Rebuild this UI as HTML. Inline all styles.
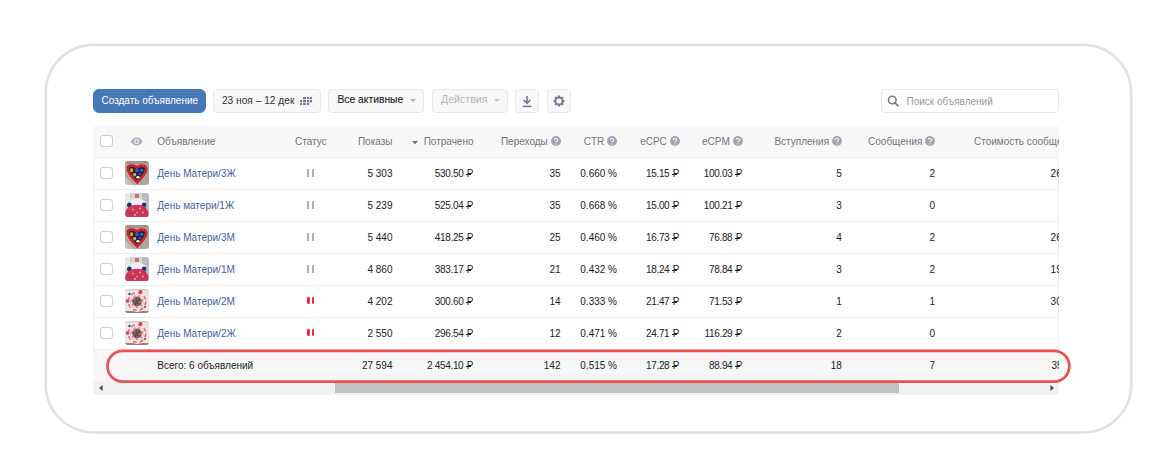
<!DOCTYPE html>
<html><head><meta charset="utf-8"><style>
*{margin:0;padding:0;box-sizing:border-box}
html,body{width:1176px;height:471px;background:#fff;overflow:hidden;position:relative;font-family:"Liberation Sans", sans-serif;font-size:10px}
#root{position:absolute;left:0;top:0;width:1176px;height:471px;}
.rub{position:relative;display:inline-block;margin-left:1px;letter-spacing:0}
.rub:after{content:'';position:absolute;left:-0.9px;width:4.6px;top:16.4px;height:1px;background:currentColor}
.num{letter-spacing:-0.32px}
.t{position:absolute;white-space:nowrap;font-size:10px}
.a{position:absolute;display:block}
.card{position:absolute;left:44.5px;top:43px;width:1089px;height:390.5px;border:3px solid #e6e6e6;border-radius:50px}
.btn{position:absolute;background:#f8f8f9;border:1px solid #e8e9ec;border-radius:4px}
.btn.blue{background:#4877b7;border-color:#4877b7;border-radius:6px}
.search{position:absolute;left:881px;top:89.2px;width:178px;height:23.6px;background:#fff;border:1px solid #e6e8ec;border-radius:4px}
.tbl{position:absolute;left:93.4px;top:125.5px;width:966px;height:269.5px;border:1px solid #eef0f2;border-radius:4px}
.thead{position:absolute;left:93.4px;top:125.5px;width:966px;height:32px;background:#f8f8f8;border-bottom:1px solid #eceef1;border-radius:4px 4px 0 0}
.cb{position:absolute;width:12.8px;height:12.1px;border:1px solid #c9ced6;border-radius:3px;background:#fff}
.rowline{position:absolute;left:93.4px;width:966px;height:1px;background:#eceef1}
.thumb{position:absolute;width:23.5px;height:24px;border-radius:3px;overflow:hidden}
.heart{background:radial-gradient(circle at 45% 45%, #2b3f7a 0 22%, transparent 23%), linear-gradient(135deg, #c9b9a7, #a08c7a);}
.pz{position:absolute;width:2.4px;height:7.6px;border-radius:0.5px}
.total{position:absolute;left:93.4px;width:966px;height:32px;background:#f7f7f8}
.track{position:absolute;left:93.4px;top:381px;width:966px;height:13.7px;background:#f1f1f1;border-radius:0 0 4px 4px}
.thumbbar{position:absolute;left:334.8px;top:383.2px;width:564.7px;height:9.6px;background:#c1c1c1}
.clip{position:absolute;left:93.5px;top:125.5px;width:965.5px;height:256px;overflow:hidden}
.redring{position:absolute;left:106.2px;top:349.4px;width:964.4px;height:33.3px;border:3px solid #e25656;border-radius:17px}
</style></head>
<body><div id="root">
<svg class="a" style="left:0;top:0" width="1176" height="471"><rect x="45.7" y="44.9" width="1085.5" height="387.5" rx="48" ry="48" fill="none" stroke="#e2e2e2" stroke-width="2.6"/></svg>
<div class="btn blue" style="left:93px;top:89px;width:113px;height:23.9px;"></div>
<div class="t" style="left:101.5px;top:89.0px;color:#fff;line-height:24px">Создать объявление</div>
<div class="btn" style="left:213px;top:89px;width:107.5px;height:24px;"></div>
<div class="t" style="left:221.9px;top:89.0px;color:#333;line-height:24px;font-size:10.2px">23 ноя – 12 дек</div>
<svg class="a" style="left:300px;top:96.8px" width="12.2" height="8.6" viewBox="0 0 12.2 8.6"><rect x="3" y="0" width="3" height="2.2" fill="#717c8e"/><rect x="7" y="0" width="2.2" height="2.2" fill="#717c8e"/><rect x="9.9" y="0" width="2.2" height="2.2" fill="#717c8e"/><rect x="0" y="3" width="2" height="2.4" fill="#717c8e"/><rect x="3" y="3" width="3" height="2.4" fill="#717c8e"/><rect x="7" y="3" width="2.2" height="2.4" fill="#717c8e"/><rect x="9.9" y="3" width="2.2" height="2.4" fill="#717c8e"/><rect x="0" y="6.1" width="2" height="2.4" fill="#717c8e"/><rect x="3" y="6.1" width="3" height="2.4" fill="#717c8e"/><rect x="7" y="6.1" width="2.2" height="2.4" fill="#717c8e"/></svg>
<div class="btn" style="left:328.3px;top:89px;width:95.6px;height:24px;"></div>
<div class="t" style="left:337.5px;top:88.3px;color:#222;line-height:24px;font-size:10.3px;-webkit-text-stroke:0.12px #222">Все активные</div>
<svg class="a" style="left:409.8px;top:99.4px" width="6" height="3.4" viewBox="0 0 6 3.4"><path d="M0 0 H6 L3 3Z" fill="#a7b0bd"/></svg>
<div class="btn" style="left:432.2px;top:89px;width:75.6px;height:24px;"></div>
<div class="t" style="left:441.0px;top:87.4px;color:#b3b7be;line-height:24px;font-size:10.6px">Действия</div>
<svg class="a" style="left:493.8px;top:99.4px" width="6" height="3.4" viewBox="0 0 6 3.4"><path d="M0 0 H6 L3 3Z" fill="#c3c8d0"/></svg>
<div class="btn" style="left:515.2px;top:89px;width:23.8px;height:24px;"></div>
<svg class="a" style="left:521px;top:94.5px" width="12" height="13" viewBox="0 0 12 13"><path d="M6 1 V8.2 M2.6 5 L6 8.4 L9.4 5" stroke="#717d90" stroke-width="1.6" fill="none"/><rect x="1.6" y="10.6" width="8.8" height="1.5" fill="#717d90"/></svg>
<div class="btn" style="left:547.2px;top:89px;width:23.4px;height:24px;"></div>
<svg class="a" style="left:552.9px;top:95px" width="12" height="12" viewBox="0 0 12 12"><path d="M9.92 4.80 L11.35 5.25 L11.35 6.75 L9.92 7.20 L9.62 7.92 L10.31 9.25 L9.25 10.31 L7.92 9.62 L7.20 9.92 L6.75 11.35 L5.25 11.35 L4.80 9.92 L4.08 9.62 L2.75 10.31 L1.69 9.25 L2.38 7.92 L2.08 7.20 L0.65 6.75 L0.65 5.25 L2.08 4.80 L2.38 4.08 L1.69 2.75 L2.75 1.69 L4.08 2.38 L4.80 2.08 L5.25 0.65 L6.75 0.65 L7.20 2.08 L7.92 2.38 L9.25 1.69 L10.31 2.75 L9.62 4.08Z" fill="#6f7888" stroke="#6f7888" stroke-width="0.4" stroke-linejoin="round"/><circle cx="6" cy="6" r="2.6" fill="#f8f8f9"/></svg>
<div class="search"></div>
<svg class="a" style="left:886.5px;top:95.3px" width="12" height="12" viewBox="0 0 12 12"><circle cx="5.3" cy="5" r="3.8" stroke="#747d8e" stroke-width="1.6" fill="none"/><path d="M8 7.8 L10.9 10.7" stroke="#747d8e" stroke-width="1.8" stroke-linecap="round"/></svg>
<div class="t" style="left:906.5px;top:89.6px;color:#939aa4;line-height:23px;font-size:10px">Поиск объявлений</div>
<div class="tbl"></div>
<div class="thead"></div>
<div class="cb" style="left:100.3px;top:135.3px"></div>
<svg class="a" style="left:129.8px;top:137px" width="13.4" height="9" viewBox="0 0 13 9"><path d="M0.6 4.5 C2.2 1.5 4.2 0.6 6.5 0.6 C8.8 0.6 10.8 1.5 12.4 4.5 C10.8 7.5 8.8 8.4 6.5 8.4 C4.2 8.4 2.2 7.5 0.6 4.5Z" fill="#aeb4be"/><circle cx="6.5" cy="4.5" r="2.5" fill="#f8f8f8"/><circle cx="6.5" cy="4.5" r="1.5" fill="#aeb4be"/></svg>
<div class="t" style="left:157.3px;top:126.1px;color:#6f7680;line-height:32px">Объявление</div>
<div class="t" style="left:295.0px;top:126.1px;color:#6f7680;line-height:32px">Статус</div>
<div class="t r" style="right:783.5px;top:126.1px;color:#6f7680;line-height:32px">Показы</div>
<div class="t r" style="right:702.5px;top:126.1px;color:#6f7680;line-height:32px">Потрачено</div>
<svg class="a" style="left:411.9px;top:140.6px" width="6" height="4" viewBox="0 0 6 4"><path d="M0 0 H6 L3 3.2Z" fill="#656d7a"/></svg>
<div class="t r" style="right:628.2px;top:126.1px;color:#6f7680;line-height:32px">Переходы</div>
<svg class="a" style="left:550.5px;top:135.6px" width="10" height="10" viewBox="0 0 10 10"><circle cx="5" cy="5" r="5" fill="#a1a7b1"/><path d="M3.3 3.9 C3.3 2.8 4.1 2.2 5 2.2 C5.9 2.2 6.7 2.8 6.7 3.7 C6.7 4.6 5.9 4.8 5.4 5.2 C5.1 5.4 5 5.7 5 6.2" stroke="#eceef1" stroke-width="1.15" fill="none"/><circle cx="5" cy="7.9" r="0.7" fill="#eceef1"/></svg>
<div class="t r" style="right:571.7px;top:126.1px;color:#6f7680;line-height:32px">CTR</div>
<svg class="a" style="left:607.0px;top:135.6px" width="10" height="10" viewBox="0 0 10 10"><circle cx="5" cy="5" r="5" fill="#a1a7b1"/><path d="M3.3 3.9 C3.3 2.8 4.1 2.2 5 2.2 C5.9 2.2 6.7 2.8 6.7 3.7 C6.7 4.6 5.9 4.8 5.4 5.2 C5.1 5.4 5 5.7 5 6.2" stroke="#eceef1" stroke-width="1.15" fill="none"/><circle cx="5" cy="7.9" r="0.7" fill="#eceef1"/></svg>
<div class="t r" style="right:509.2px;top:126.1px;color:#6f7680;line-height:32px">eCPC</div>
<svg class="a" style="left:669.5px;top:135.6px" width="10" height="10" viewBox="0 0 10 10"><circle cx="5" cy="5" r="5" fill="#a1a7b1"/><path d="M3.3 3.9 C3.3 2.8 4.1 2.2 5 2.2 C5.9 2.2 6.7 2.8 6.7 3.7 C6.7 4.6 5.9 4.8 5.4 5.2 C5.1 5.4 5 5.7 5 6.2" stroke="#eceef1" stroke-width="1.15" fill="none"/><circle cx="5" cy="7.9" r="0.7" fill="#eceef1"/></svg>
<div class="t r" style="right:446.2px;top:126.1px;color:#6f7680;line-height:32px">eCPM</div>
<svg class="a" style="left:732.5px;top:135.6px" width="10" height="10" viewBox="0 0 10 10"><circle cx="5" cy="5" r="5" fill="#a1a7b1"/><path d="M3.3 3.9 C3.3 2.8 4.1 2.2 5 2.2 C5.9 2.2 6.7 2.8 6.7 3.7 C6.7 4.6 5.9 4.8 5.4 5.2 C5.1 5.4 5 5.7 5 6.2" stroke="#eceef1" stroke-width="1.15" fill="none"/><circle cx="5" cy="7.9" r="0.7" fill="#eceef1"/></svg>
<div class="t r" style="right:346.9px;top:126.1px;color:#6f7680;line-height:32px">Вступления</div>
<svg class="a" style="left:831.8px;top:135.6px" width="10" height="10" viewBox="0 0 10 10"><circle cx="5" cy="5" r="5" fill="#a1a7b1"/><path d="M3.3 3.9 C3.3 2.8 4.1 2.2 5 2.2 C5.9 2.2 6.7 2.8 6.7 3.7 C6.7 4.6 5.9 4.8 5.4 5.2 C5.1 5.4 5 5.7 5 6.2" stroke="#eceef1" stroke-width="1.15" fill="none"/><circle cx="5" cy="7.9" r="0.7" fill="#eceef1"/></svg>
<div class="t r" style="right:253.7px;top:126.1px;color:#6f7680;line-height:32px">Сообщения</div>
<svg class="a" style="left:925.0px;top:135.6px" width="10" height="10" viewBox="0 0 10 10"><circle cx="5" cy="5" r="5" fill="#a1a7b1"/><path d="M3.3 3.9 C3.3 2.8 4.1 2.2 5 2.2 C5.9 2.2 6.7 2.8 6.7 3.7 C6.7 4.6 5.9 4.8 5.4 5.2 C5.1 5.4 5 5.7 5 6.2" stroke="#eceef1" stroke-width="1.15" fill="none"/><circle cx="5" cy="7.9" r="0.7" fill="#eceef1"/></svg>
<div class="rowline" style="top:188.5px"></div>
<div class="cb" style="left:100.3px;top:167.4px"></div>
<div class="thumb" style="left:125px;top:161.3px"><svg width="23.5" height="24" viewBox="0 0 23.5 24"><defs><filter id="bh0" x="-10%" y="-10%" width="120%" height="120%"><feGaussianBlur stdDeviation="0.6"/></filter></defs>
<g filter="url(#bh0)"><rect x="-2" y="-2" width="28" height="28" fill="#b3a79c"/>
<rect x="-2" y="-2" width="28" height="5" fill="#a39488"/>
<path d="M-2 13 L11 26 L-2 26Z" fill="#c9c0b8"/>
<path d="M12 6.6 C10 4.2 4.8 3.6 3.1 6 C1.7 8.3 3.4 12.8 12.2 21.4 C20 13.6 22.3 9.3 20.9 6.3 C19.6 3.9 14.2 4 12 6.6Z" fill="#1c2446" stroke="#d62a30" stroke-width="2.7"/>
<path d="M12 6.6 C10 4.2 4.8 3.6 3.1 6 C1.7 8.3 3.4 12.8 12.2 21.4 C20 13.6 22.3 9.3 20.9 6.3 C19.6 3.9 14.2 4 12 6.6Z" fill="none" stroke="#7a1a22" stroke-width="1" stroke-dasharray="1 2.2"/>
<ellipse cx="6.6" cy="9.3" rx="1.6" ry="2" fill="#dca23c"/>
<ellipse cx="9.6" cy="13.6" rx="1.6" ry="1.8" fill="#dea646"/>
<ellipse cx="13" cy="16.3" rx="1.7" ry="1.3" fill="#e8ecf2"/>
<circle cx="11.8" cy="9.6" r="1.8" fill="#3460ac"/>
<circle cx="16.6" cy="9.3" r="1.8" fill="#3a62b0"/>
<circle cx="14.8" cy="12.8" r="1.5" fill="#2a4c98"/>
</g></svg></div>
<div class="t" style="left:157.3px;top:157.5px;color:#3f6499;line-height:32px">День Матери/3Ж</div>
<div class="pz" style="left:307px;top:169.0px;background:#a8b0bc"></div><div class="pz" style="left:312px;top:169.0px;background:#a8b0bc"></div>
<div class="t r" style="right:783.5px;top:157.5px;color:#222;line-height:32px">5 303</div>
<div class="t r" style="right:702.5px;top:157.5px;color:#222;line-height:32px"><span class="num">530.50 <span class="rub">Р</span></span></div>
<div class="t r" style="right:615.5px;top:157.5px;color:#222;line-height:32px">35</div>
<div class="t r" style="right:559.0px;top:157.5px;color:#222;line-height:32px">0.660 %</div>
<div class="t r" style="right:496.5px;top:157.5px;color:#222;line-height:32px"><span class="num">15.15 <span class="rub">Р</span></span></div>
<div class="t r" style="right:433.5px;top:157.5px;color:#222;line-height:32px"><span class="num">100.03 <span class="rub">Р</span></span></div>
<div class="t r" style="right:334.2px;top:157.5px;color:#222;line-height:32px">5</div>
<div class="t r" style="right:241.0px;top:157.5px;color:#222;line-height:32px">2</div>
<div class="rowline" style="top:220.5px"></div>
<div class="cb" style="left:100.3px;top:199.4px"></div>
<div class="thumb" style="left:125px;top:193.3px"><svg width="23.5" height="24" viewBox="0 0 23.5 24"><defs><filter id="bb1" x="-10%" y="-10%" width="120%" height="120%"><feGaussianBlur stdDeviation="0.7"/></filter></defs>
<g filter="url(#bb1)"><rect x="-2" y="-2" width="28" height="28" fill="#d4d5d9"/>
<rect x="-2" y="-2" width="7" height="14" fill="#e8e8ea"/>
<rect x="17" y="-2" width="9" height="28" fill="#bcbdc2"/>
<rect x="10" y="1" width="4" height="4" fill="#c87478"/>
<ellipse cx="12" cy="9.5" rx="8.5" ry="4" fill="#eef0f4"/>
<ellipse cx="4.4" cy="12" rx="2.3" ry="2.6" fill="#22367a"/>
<ellipse cx="19" cy="12" rx="2.3" ry="2.6" fill="#22367a"/>
<path d="M0 24 C0 15 4 11.8 12 11.8 C20 11.8 23.5 15 23.5 24Z" fill="#cc3458"/>
<circle cx="8" cy="16.5" r="0.9" fill="#ee8ca0"/><circle cx="15" cy="15.5" r="1" fill="#f4b0bc"/><circle cx="12" cy="19.5" r="0.9" fill="#ee8ca0"/><circle cx="18" cy="19.5" r="0.9" fill="#f0a0b0"/><circle cx="5" cy="20.5" r="0.9" fill="#a82444"/><circle cx="10" cy="22" r="0.9" fill="#f2a8b8"/><circle cx="4" cy="16" r="1" fill="#e03c4a"/>
</g></svg></div>
<div class="t" style="left:157.3px;top:189.5px;color:#3f6499;line-height:32px">День матери/1Ж</div>
<div class="pz" style="left:307px;top:201.0px;background:#a8b0bc"></div><div class="pz" style="left:312px;top:201.0px;background:#a8b0bc"></div>
<div class="t r" style="right:783.5px;top:189.5px;color:#222;line-height:32px">5 239</div>
<div class="t r" style="right:702.5px;top:189.5px;color:#222;line-height:32px"><span class="num">525.04 <span class="rub">Р</span></span></div>
<div class="t r" style="right:615.5px;top:189.5px;color:#222;line-height:32px">35</div>
<div class="t r" style="right:559.0px;top:189.5px;color:#222;line-height:32px">0.668 %</div>
<div class="t r" style="right:496.5px;top:189.5px;color:#222;line-height:32px"><span class="num">15.00 <span class="rub">Р</span></span></div>
<div class="t r" style="right:433.5px;top:189.5px;color:#222;line-height:32px"><span class="num">100.21 <span class="rub">Р</span></span></div>
<div class="t r" style="right:334.2px;top:189.5px;color:#222;line-height:32px">3</div>
<div class="t r" style="right:241.0px;top:189.5px;color:#222;line-height:32px">0</div>
<div class="rowline" style="top:252.5px"></div>
<div class="cb" style="left:100.3px;top:231.4px"></div>
<div class="thumb" style="left:125px;top:225.3px"><svg width="23.5" height="24" viewBox="0 0 23.5 24"><defs><filter id="bh2" x="-10%" y="-10%" width="120%" height="120%"><feGaussianBlur stdDeviation="0.6"/></filter></defs>
<g filter="url(#bh2)"><rect x="-2" y="-2" width="28" height="28" fill="#b3a79c"/>
<rect x="-2" y="-2" width="28" height="5" fill="#a39488"/>
<path d="M-2 13 L11 26 L-2 26Z" fill="#c9c0b8"/>
<path d="M12 6.6 C10 4.2 4.8 3.6 3.1 6 C1.7 8.3 3.4 12.8 12.2 21.4 C20 13.6 22.3 9.3 20.9 6.3 C19.6 3.9 14.2 4 12 6.6Z" fill="#1c2446" stroke="#d62a30" stroke-width="2.7"/>
<path d="M12 6.6 C10 4.2 4.8 3.6 3.1 6 C1.7 8.3 3.4 12.8 12.2 21.4 C20 13.6 22.3 9.3 20.9 6.3 C19.6 3.9 14.2 4 12 6.6Z" fill="none" stroke="#7a1a22" stroke-width="1" stroke-dasharray="1 2.2"/>
<ellipse cx="6.6" cy="9.3" rx="1.6" ry="2" fill="#dca23c"/>
<ellipse cx="9.6" cy="13.6" rx="1.6" ry="1.8" fill="#dea646"/>
<ellipse cx="13" cy="16.3" rx="1.7" ry="1.3" fill="#e8ecf2"/>
<circle cx="11.8" cy="9.6" r="1.8" fill="#3460ac"/>
<circle cx="16.6" cy="9.3" r="1.8" fill="#3a62b0"/>
<circle cx="14.8" cy="12.8" r="1.5" fill="#2a4c98"/>
</g></svg></div>
<div class="t" style="left:157.3px;top:221.5px;color:#3f6499;line-height:32px">День Матери/3М</div>
<div class="pz" style="left:307px;top:233.0px;background:#a8b0bc"></div><div class="pz" style="left:312px;top:233.0px;background:#a8b0bc"></div>
<div class="t r" style="right:783.5px;top:221.5px;color:#222;line-height:32px">5 440</div>
<div class="t r" style="right:702.5px;top:221.5px;color:#222;line-height:32px"><span class="num">418.25 <span class="rub">Р</span></span></div>
<div class="t r" style="right:615.5px;top:221.5px;color:#222;line-height:32px">25</div>
<div class="t r" style="right:559.0px;top:221.5px;color:#222;line-height:32px">0.460 %</div>
<div class="t r" style="right:496.5px;top:221.5px;color:#222;line-height:32px"><span class="num">16.73 <span class="rub">Р</span></span></div>
<div class="t r" style="right:433.5px;top:221.5px;color:#222;line-height:32px"><span class="num">76.88 <span class="rub">Р</span></span></div>
<div class="t r" style="right:334.2px;top:221.5px;color:#222;line-height:32px">4</div>
<div class="t r" style="right:241.0px;top:221.5px;color:#222;line-height:32px">2</div>
<div class="rowline" style="top:284.5px"></div>
<div class="cb" style="left:100.3px;top:263.4px"></div>
<div class="thumb" style="left:125px;top:257.3px"><svg width="23.5" height="24" viewBox="0 0 23.5 24"><defs><filter id="bb3" x="-10%" y="-10%" width="120%" height="120%"><feGaussianBlur stdDeviation="0.7"/></filter></defs>
<g filter="url(#bb3)"><rect x="-2" y="-2" width="28" height="28" fill="#d4d5d9"/>
<rect x="-2" y="-2" width="7" height="14" fill="#e8e8ea"/>
<rect x="17" y="-2" width="9" height="28" fill="#bcbdc2"/>
<rect x="10" y="1" width="4" height="4" fill="#c87478"/>
<ellipse cx="12" cy="9.5" rx="8.5" ry="4" fill="#eef0f4"/>
<ellipse cx="4.4" cy="12" rx="2.3" ry="2.6" fill="#22367a"/>
<ellipse cx="19" cy="12" rx="2.3" ry="2.6" fill="#22367a"/>
<path d="M0 24 C0 15 4 11.8 12 11.8 C20 11.8 23.5 15 23.5 24Z" fill="#cc3458"/>
<circle cx="8" cy="16.5" r="0.9" fill="#ee8ca0"/><circle cx="15" cy="15.5" r="1" fill="#f4b0bc"/><circle cx="12" cy="19.5" r="0.9" fill="#ee8ca0"/><circle cx="18" cy="19.5" r="0.9" fill="#f0a0b0"/><circle cx="5" cy="20.5" r="0.9" fill="#a82444"/><circle cx="10" cy="22" r="0.9" fill="#f2a8b8"/><circle cx="4" cy="16" r="1" fill="#e03c4a"/>
</g></svg></div>
<div class="t" style="left:157.3px;top:253.5px;color:#3f6499;line-height:32px">День Матери/1М</div>
<div class="pz" style="left:307px;top:265.0px;background:#a8b0bc"></div><div class="pz" style="left:312px;top:265.0px;background:#a8b0bc"></div>
<div class="t r" style="right:783.5px;top:253.5px;color:#222;line-height:32px">4 860</div>
<div class="t r" style="right:702.5px;top:253.5px;color:#222;line-height:32px"><span class="num">383.17 <span class="rub">Р</span></span></div>
<div class="t r" style="right:615.5px;top:253.5px;color:#222;line-height:32px">21</div>
<div class="t r" style="right:559.0px;top:253.5px;color:#222;line-height:32px">0.432 %</div>
<div class="t r" style="right:496.5px;top:253.5px;color:#222;line-height:32px"><span class="num">18.24 <span class="rub">Р</span></span></div>
<div class="t r" style="right:433.5px;top:253.5px;color:#222;line-height:32px"><span class="num">78.84 <span class="rub">Р</span></span></div>
<div class="t r" style="right:334.2px;top:253.5px;color:#222;line-height:32px">3</div>
<div class="t r" style="right:241.0px;top:253.5px;color:#222;line-height:32px">2</div>
<div class="rowline" style="top:316.5px"></div>
<div class="cb" style="left:100.3px;top:295.4px"></div>
<div class="thumb" style="left:125px;top:289.3px"><svg width="23.5" height="24" viewBox="0 0 23.5 24"><defs><filter id="br4" x="-10%" y="-10%" width="120%" height="120%"><feGaussianBlur stdDeviation="0.7"/></filter></defs>
<g filter="url(#br4)"><rect x="-2" y="-2" width="28" height="28" fill="#e9e6e8"/>
<rect x="-2" y="-2" width="28" height="3.5" fill="#d8ccc0"/>
<rect x="-2" y="22" width="28" height="4" fill="#9a8270"/>
<circle cx="12" cy="12.5" r="10.5" fill="#f4e8ea"/>
<circle cx="12" cy="12.5" r="8.8" fill="none" stroke="#e66a80" stroke-width="1.6" stroke-dasharray="4 3"/>
<circle cx="12" cy="12.5" r="6.8" fill="#c89098"/>
<circle cx="12" cy="12.5" r="5.8" fill="none" stroke="#f6e4e6" stroke-width="1.3" stroke-dasharray="3 2"/>
<circle cx="12" cy="12.5" r="4.4" fill="#6a5040"/>
<circle cx="12" cy="12.5" r="3" fill="none" stroke="#e07a88" stroke-width="1.1" stroke-dasharray="2 1.5"/>
<circle cx="10.5" cy="15" r="1.4" fill="#3a5236"/>
<circle cx="14" cy="10" r="1.1" fill="#44583c"/>
<circle cx="2.6" cy="12" r="1.9" fill="#ea4458"/>
<circle cx="15.5" cy="3" r="2" fill="#e63c50"/>
<circle cx="4.5" cy="5" r="1.2" fill="#404660"/>
<circle cx="20" cy="18" r="1.2" fill="#dc4a60"/>
</g></svg></div>
<div class="t" style="left:157.3px;top:285.5px;color:#3f6499;line-height:32px">День Матери/2М</div>
<div class="pz" style="left:306.9px;top:296.8px;width:2.8px;border-radius:1.2px;background:#e3343f"></div><div class="pz" style="left:311.7px;top:296.8px;width:2.8px;border-radius:1.2px;background:#e3343f"></div>
<div class="t r" style="right:783.5px;top:285.5px;color:#222;line-height:32px">4 202</div>
<div class="t r" style="right:702.5px;top:285.5px;color:#222;line-height:32px"><span class="num">300.60 <span class="rub">Р</span></span></div>
<div class="t r" style="right:615.5px;top:285.5px;color:#222;line-height:32px">14</div>
<div class="t r" style="right:559.0px;top:285.5px;color:#222;line-height:32px">0.333 %</div>
<div class="t r" style="right:496.5px;top:285.5px;color:#222;line-height:32px"><span class="num">21.47 <span class="rub">Р</span></span></div>
<div class="t r" style="right:433.5px;top:285.5px;color:#222;line-height:32px"><span class="num">71.53 <span class="rub">Р</span></span></div>
<div class="t r" style="right:334.2px;top:285.5px;color:#222;line-height:32px">1</div>
<div class="t r" style="right:241.0px;top:285.5px;color:#222;line-height:32px">1</div>
<div class="rowline" style="top:348.5px"></div>
<div class="cb" style="left:100.3px;top:327.4px"></div>
<div class="thumb" style="left:125px;top:321.3px"><svg width="23.5" height="24" viewBox="0 0 23.5 24"><defs><filter id="br5" x="-10%" y="-10%" width="120%" height="120%"><feGaussianBlur stdDeviation="0.7"/></filter></defs>
<g filter="url(#br5)"><rect x="-2" y="-2" width="28" height="28" fill="#e9e6e8"/>
<rect x="-2" y="-2" width="28" height="3.5" fill="#d8ccc0"/>
<rect x="-2" y="22" width="28" height="4" fill="#9a8270"/>
<circle cx="12" cy="12.5" r="10.5" fill="#f4e8ea"/>
<circle cx="12" cy="12.5" r="8.8" fill="none" stroke="#e66a80" stroke-width="1.6" stroke-dasharray="4 3"/>
<circle cx="12" cy="12.5" r="6.8" fill="#c89098"/>
<circle cx="12" cy="12.5" r="5.8" fill="none" stroke="#f6e4e6" stroke-width="1.3" stroke-dasharray="3 2"/>
<circle cx="12" cy="12.5" r="4.4" fill="#6a5040"/>
<circle cx="12" cy="12.5" r="3" fill="none" stroke="#e07a88" stroke-width="1.1" stroke-dasharray="2 1.5"/>
<circle cx="10.5" cy="15" r="1.4" fill="#3a5236"/>
<circle cx="14" cy="10" r="1.1" fill="#44583c"/>
<circle cx="2.6" cy="12" r="1.9" fill="#ea4458"/>
<circle cx="15.5" cy="3" r="2" fill="#e63c50"/>
<circle cx="4.5" cy="5" r="1.2" fill="#404660"/>
<circle cx="20" cy="18" r="1.2" fill="#dc4a60"/>
</g></svg></div>
<div class="t" style="left:157.3px;top:317.5px;color:#3f6499;line-height:32px">День Матери/2Ж</div>
<div class="pz" style="left:306.9px;top:328.8px;width:2.8px;border-radius:1.2px;background:#e3343f"></div><div class="pz" style="left:311.7px;top:328.8px;width:2.8px;border-radius:1.2px;background:#e3343f"></div>
<div class="t r" style="right:783.5px;top:317.5px;color:#222;line-height:32px">2 550</div>
<div class="t r" style="right:702.5px;top:317.5px;color:#222;line-height:32px"><span class="num">296.54 <span class="rub">Р</span></span></div>
<div class="t r" style="right:615.5px;top:317.5px;color:#222;line-height:32px">12</div>
<div class="t r" style="right:559.0px;top:317.5px;color:#222;line-height:32px">0.471 %</div>
<div class="t r" style="right:496.5px;top:317.5px;color:#222;line-height:32px"><span class="num">24.71 <span class="rub">Р</span></span></div>
<div class="t r" style="right:433.5px;top:317.5px;color:#222;line-height:32px"><span class="num">116.29 <span class="rub">Р</span></span></div>
<div class="t r" style="right:334.2px;top:317.5px;color:#222;line-height:32px">2</div>
<div class="t r" style="right:241.0px;top:317.5px;color:#222;line-height:32px">0</div>
<div class="total" style="top:349.5px"></div>
<div class="t" style="left:157.3px;top:349.5px;color:#222;line-height:32px">Всего: 6 объявлений</div>
<div class="t r" style="right:783.5px;top:349.5px;color:#222;line-height:32px">27 594</div>
<div class="t r" style="right:702.5px;top:349.5px;color:#222;line-height:32px"><span class="num">2 454.10 <span class="rub">Р</span></span></div>
<div class="t r" style="right:615.5px;top:349.5px;color:#222;line-height:32px">142</div>
<div class="t r" style="right:559.0px;top:349.5px;color:#222;line-height:32px">0.515 %</div>
<div class="t r" style="right:496.5px;top:349.5px;color:#222;line-height:32px"><span class="num">17.28 <span class="rub">Р</span></span></div>
<div class="t r" style="right:433.5px;top:349.5px;color:#222;line-height:32px"><span class="num">88.94 <span class="rub">Р</span></span></div>
<div class="t r" style="right:334.2px;top:349.5px;color:#222;line-height:32px">18</div>
<div class="t r" style="right:241.0px;top:349.5px;color:#222;line-height:32px">7</div>
<div class="track"></div>
<div class="thumbbar"></div>
<svg class="a" style="left:99px;top:385px" width="4" height="6" viewBox="0 0 4 6"><path d="M3.6 0 V6 L0 3Z" fill="#4a4a4a"/></svg>
<svg class="a" style="left:1050px;top:385px" width="4" height="6" viewBox="0 0 4 6"><path d="M0.4 0 V6 L4 3Z" fill="#4a4a4a"/></svg>
<div class="clip"><div class="t" style="left:880.5px;top:0.6px;color:#6f7680;line-height:32px">Стоимость сообщения</div><div class="t" style="left:957.1px;top:32.0px;line-height:32px;color:#222">261.00 <span class="rub">Р</span></div><div class="t" style="left:957.1px;top:96.0px;line-height:32px;color:#222">261.00 <span class="rub">Р</span></div><div class="t" style="left:957.1px;top:128.0px;line-height:32px;color:#222">191.00 <span class="rub">Р</span></div><div class="t" style="left:957.1px;top:160.0px;line-height:32px;color:#222">301.00 <span class="rub">Р</span></div><div class="t" style="left:958.0px;top:224.0px;line-height:32px;color:#222">35.06 <span class="rub">Р</span></div></div>
<svg class="a" style="left:0;top:0" width="1176" height="471"><rect x="107.5" y="350.8" width="961.8" height="30.9" rx="15.45" ry="15.45" fill="none" stroke="#e8534f" stroke-width="2.7"/></svg>
</div></body></html>
